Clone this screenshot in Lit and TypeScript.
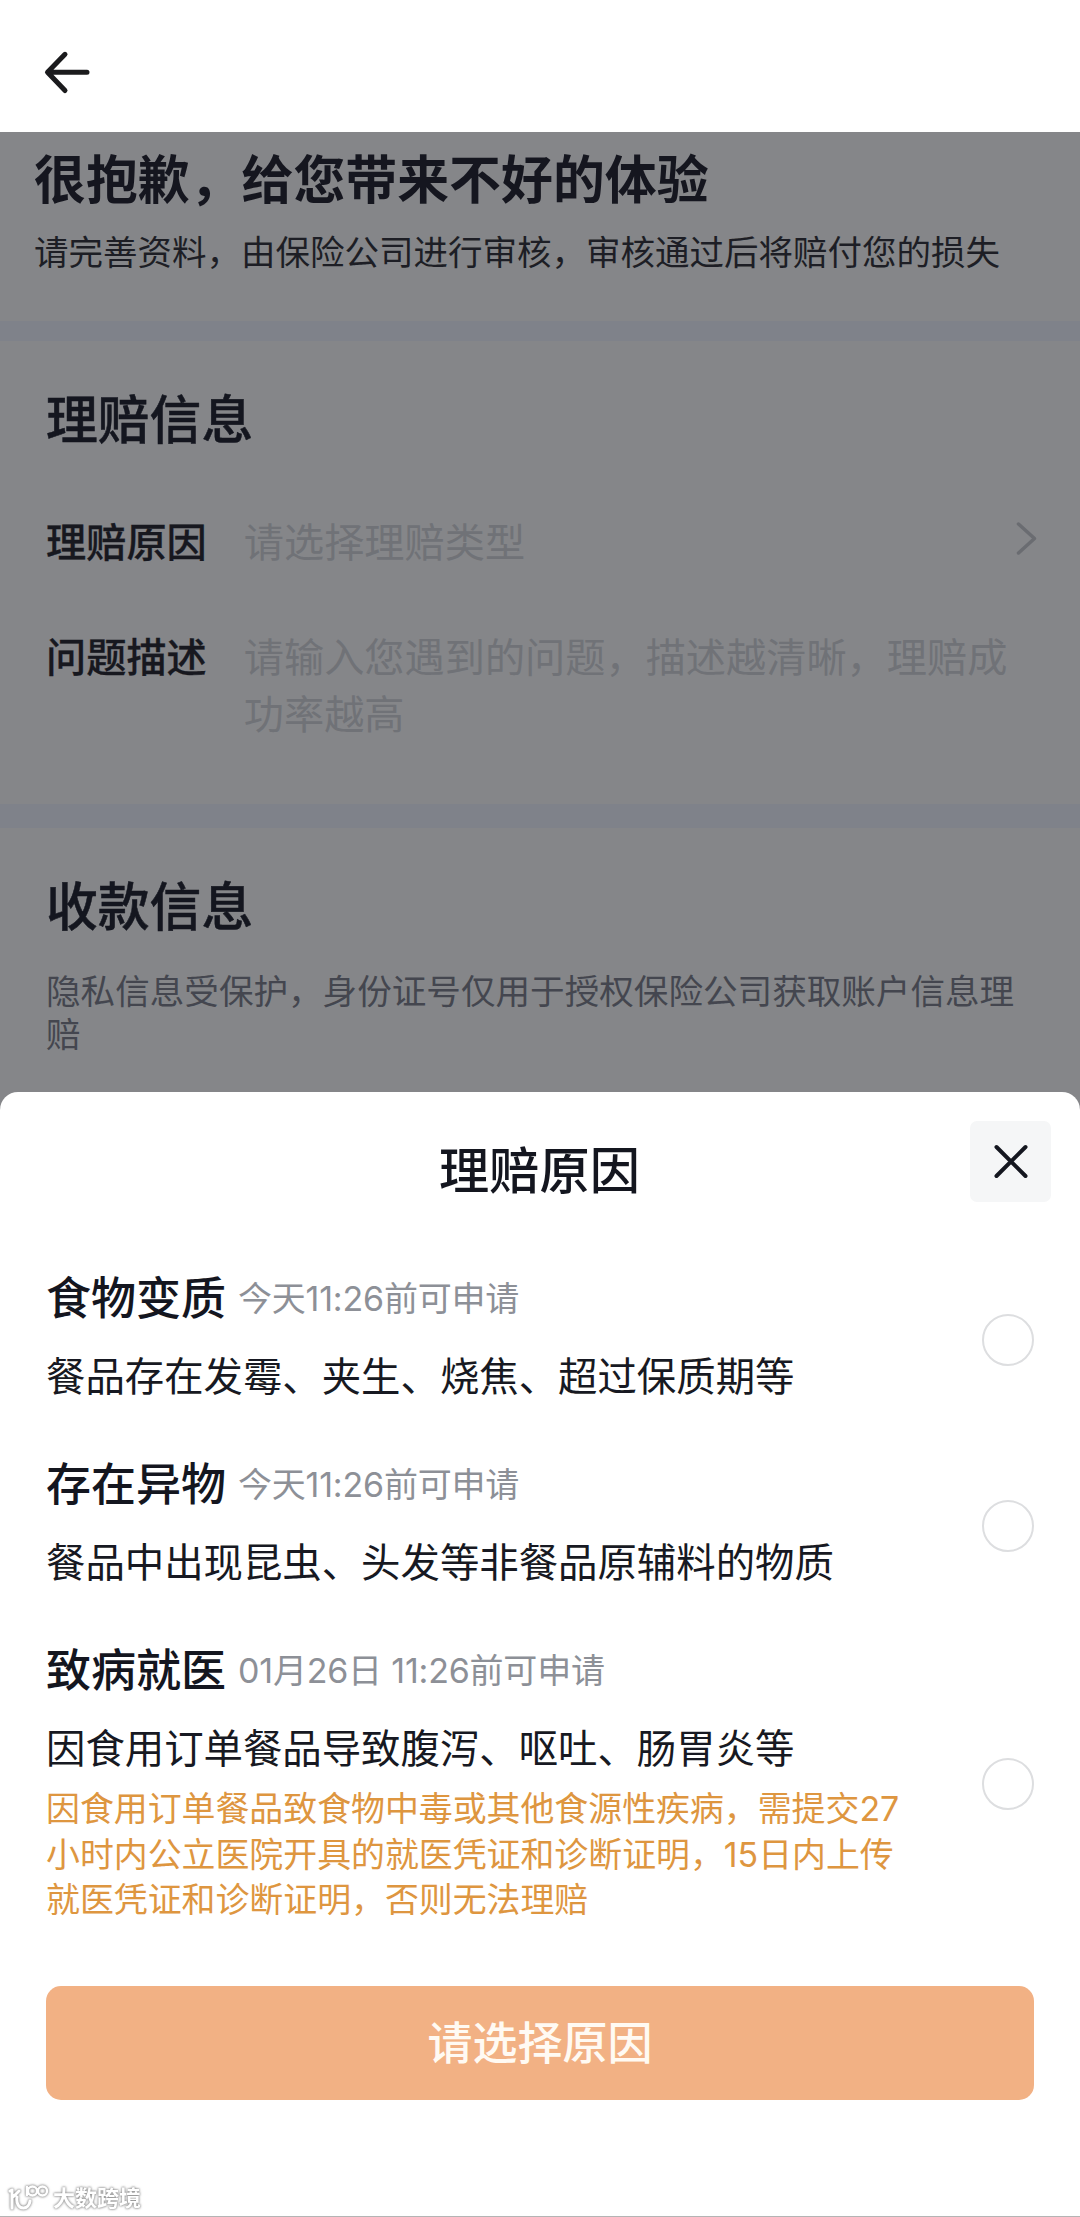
import { LitElement, html, css, svg, nothing } from "lit";
import { customElement, property } from "lit/decorators.js";

interface Reason {
  title: string;
  deadline: string;
  detail: string;
  notice?: string[];
}

const REASONS: Reason[] = [
  { title: "食物变质", deadline: "今天11:26前可申请", detail: "餐品存在发霉、夹生、烧焦、超过保质期等" },
  { title: "存在异物", deadline: "今天11:26前可申请", detail: "餐品中出现昆虫、头发等非餐品原辅料的物质" },
  {
    title: "致病就医",
    deadline: "01月26日 11:26前可申请",
    detail: "因食用订单餐品导致腹泻、呕吐、肠胃炎等",
    notice: [
      "因食用订单餐品致食物中毒或其他食源性疾病，需提交27",
      "小时内公立医院开具的就医凭证和诊断证明，15日内上传",
      "就医凭证和诊断证明，否则无法理赔",
    ],
  },
];

@customElement("reason-option")
export class ReasonOption extends LitElement {
  @property({ attribute: false }) reason!: Reason;

  static styles = css`
    :host {
      display: flex;
      align-items: center;
      justify-content: space-between;
      padding: 0 46px;
    }
    .heading {
      display: flex;
      align-items: center;
      gap: 12px;
      height: 64px;
      white-space: nowrap;
    }
    .title {
      font-size: 45px;
      font-weight: 500;
      line-height: 64px;
      color: #14161f;
    }
    .deadline {
      font-size: 34px;
      line-height: 64px;
      letter-spacing: -0.2px;
      color: #8d9097;
    }
    .detail {
      margin-top: 18px;
      font-size: 39.4px;
      line-height: 57px;
      color: #171922;
      white-space: nowrap;
    }
    .notice {
      margin-top: 8px;
      font-size: 33.9px;
      line-height: 45.6px;
      color: #de9640;
      white-space: nowrap;
    }
    .radio {
      box-sizing: border-box;
      flex: none;
      width: 52px;
      height: 52px;
      margin-top: 6px;
      border: 2px solid #dddee0;
      border-radius: 50%;
    }
  `;

  render() {
    const r = this.reason;
    return html`
      <div class="body">
        <div class="heading">
          <span class="title">${r.title}</span>
          <span class="deadline">${r.deadline}</span>
        </div>
        <div class="detail">${r.detail}</div>
        ${r.notice
          ? html`<div class="notice">${r.notice.map((line) => html`<div>${line}</div>`)}</div>`
          : nothing}
      </div>
      <span class="radio"></span>
    `;
  }
}

const stroke = (d: string, width: number) =>
  svg`<path d=${d} fill="none" stroke="currentColor" stroke-width=${width} stroke-linecap="round" stroke-linejoin="round" />`;

@customElement("app-root")
export class AppRoot extends LitElement {
  static styles = css`
    :host {
      display: flex;
      flex-direction: column;
      box-sizing: border-box;
      position: relative;
      width: 1080px;
      height: 2217px;
      overflow: hidden;
      background: #858689;
      border-bottom: 1px solid #b4b4b4;
      font-family: Inter, "Noto Sans CJK SC", sans-serif;
      color: #14161f;
    }
    svg {
      display: block;
      flex: none;
    }
    .nav {
      flex: none;
      height: 132px;
      padding: 48px 0 0 42px;
      box-sizing: border-box;
      background: #fff;
      color: #1b1b1d;
    }
    .intro {
      flex: none;
      height: 189px;
      box-sizing: border-box;
      padding: 13px 34px 0;
      white-space: nowrap;
    }
    .intro-title {
      font-size: 51.9px;
      font-weight: 700;
      line-height: 72px;
      color: #15161f;
    }
    .intro-text {
      margin-top: 12px;
      font-size: 34.5px;
      line-height: 48px;
      color: #1d1e25;
    }
    .band {
      flex: none;
      height: 20px;
      background: #7f828a;
    }
    .band.tall {
      height: 24px;
    }
    .claim {
      flex: none;
      height: 463px;
      box-sizing: border-box;
      padding: 43px 42px 0 46px;
    }
    .section-title {
      font-size: 51.8px;
      font-weight: 500;
      line-height: 72px;
      -webkit-text-stroke: 0.5px currentColor;
    }
    .field {
      display: flex;
      gap: 37px;
      font-size: 40.2px;
      line-height: 57.5px;
      white-space: nowrap;
    }
    .field.reason {
      margin-top: 58px;
    }
    .field.issue {
      margin-top: 57px;
    }
    .label {
      font-weight: 500;
      color: #17181f;
      -webkit-text-stroke: 0.3px currentColor;
    }
    .placeholder {
      flex: 1;
      color: #707277;
    }
    .chevron {
      margin-top: 5px;
      color: #6a6c71;
    }
    .payee {
      flex: none;
      height: 264px;
      box-sizing: border-box;
      padding: 43px 46px 0;
    }
    .privacy {
      margin-top: 27px;
      font-size: 34.6px;
      line-height: 42.6px;
      color: #44464f;
      white-space: nowrap;
    }
    .sheet {
      flex: 1;
      display: flex;
      flex-direction: column;
      border-radius: 18px 18px 0 0;
      background: #fff;
    }
    .sheet-head {
      flex: none;
      height: 175px;
      display: grid;
      grid-template-columns: 110px 1fr 81px;
      align-items: start;
      padding: 29px 29px 0 29px;
      box-sizing: border-box;
    }
    .sheet-title {
      grid-column: 2;
      margin-top: 14px;
      padding-right: 30px;
      text-align: center;
      font-size: 50.2px;
      font-weight: 500;
      line-height: 72px;
    }
    .close {
      display: flex;
      align-items: center;
      justify-content: center;
      width: 81px;
      height: 81px;
      border-radius: 7px;
      background: #f5f6f7;
    }
    .options {
      display: flex;
      flex-direction: column;
      gap: 47px;
    }
    .submit {
      flex: none;
      box-sizing: border-box;
      display: flex;
      align-items: center;
      justify-content: center;
      height: 114px;
      margin: 63px 46px 0;
      padding-top: 2px;
      border-radius: 15px;
      background: #f2b184;
      color: #fffaf3;
      font-size: 45px;
      font-weight: 500;
      line-height: 64px;
    }
    .mark {
      position: absolute;
      left: 8px;
      bottom: 3px;
      display: flex;
      align-items: center;
      gap: 3px;
      color: #fff;
      font-size: 22px;
      font-weight: 700;
      line-height: 30px;
      filter: drop-shadow(0 0 1px #888) drop-shadow(0 0 1px #bbb);
    }
  `;

  render() {
    return html`
      <div class="nav">
        <svg width="50" height="48" viewBox="0 0 50 48">
          ${stroke("M45 24.3H6M23 6.3L5.5 24.3L23 42.5", 5)}
        </svg>
      </div>
      <div class="intro">
        <div class="intro-title">很抱歉，给您带来不好的体验</div>
        <div class="intro-text">请完善资料，由保险公司进行审核，审核通过后将赔付您的损失</div>
      </div>
      <div class="band"></div>
      <div class="claim">
        <div class="section-title">理赔信息</div>
        <div class="field reason">
          <span class="label">理赔原因</span>
          <span class="placeholder">请选择理赔类型</span>
          <svg class="chevron" width="24" height="38" viewBox="0 0 24 38">
            ${stroke("M4.5 5L20.5 19.5L4.5 34", 3.5)}
          </svg>
        </div>
        <div class="field issue">
          <span class="label">问题描述</span>
          <span class="placeholder">请输入您遇到的问题，描述越清晰，理赔成<br />功率越高</span>
        </div>
      </div>
      <div class="band tall"></div>
      <div class="payee">
        <div class="section-title">收款信息</div>
        <div class="privacy">隐私信息受保护，身份证号仅用于授权保险公司获取账户信息理<br />赔</div>
      </div>
      <div class="sheet">
        <div class="sheet-head">
          <div class="sheet-title">理赔原因</div>
          <div class="close">
            <svg width="40" height="40" viewBox="0 0 40 40">${stroke("M5.5 5L34.5 34M34.5 5L5.500 34", 4)}</svg>
          </div>
        </div>
        <div class="options">
          ${REASONS.map((r) => html`<reason-option .reason=${r}></reason-option>`)}
        </div>
        <div class="submit">请选择原因</div>
      </div>
      <div class="mark">
        <svg width="42" height="30" viewBox="0 0 42 30">
          ${stroke("M2 8L4 7V25M4 15L11 8M9 14C8 21 11 25 15.500 25C19 25 21.500 22 22 18", 3)}
          ${stroke("M19 4V12M20 8A4.500 4.500 0 1 1 29 8A4.500 4.500 0 1 1 20 8M30 8A4.500 4.500 0 1 1 39 8A4.500 4.500 0 1 1 30 8", 2.4)}
        </svg>
        <span>大数跨境</span>
      </div>
    `;
  }
}
